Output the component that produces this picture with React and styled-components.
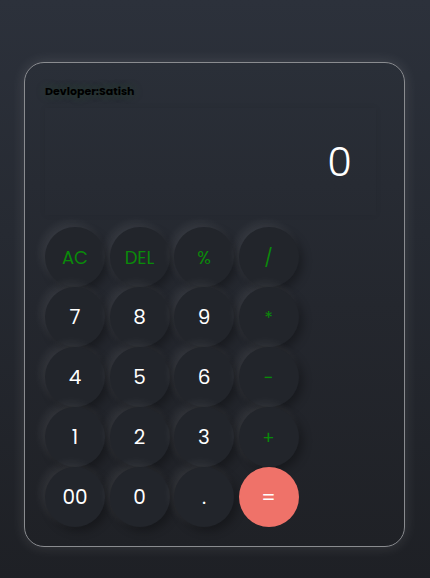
import React from 'react'
import styled, { createGlobalStyle } from 'styled-components'

const GlobalStyle = createGlobalStyle`
  html, body {
    margin: 0;
    padding: 0;
  }
  body {
    font-family: Poppins, Inter, "Liberation Sans", sans-serif;
    background: linear-gradient(180deg, #2c313b 0%, #262a32 40%, #1e2025 100%);
    min-height: 578px;
  }
`

const Page = styled.div`
  width: 430px;
  height: 578px;
  padding: 62px 0 0 24px;
  box-sizing: border-box;
`

const Card = styled.div`
  width: 381px;
  height: 485px;
  box-sizing: border-box;
  border: 1px solid #8a8c90;
  border-radius: 20px;
  background: linear-gradient(180deg, #2a2f38 0%, #24272e 50%, #1f2126 100%);
  box-shadow: 0 0 14px rgba(255, 255, 255, 0.12);
  padding: 21px 20px 0 20px;
`

const Title = styled.div`
  font-size: 11px;
  font-weight: 700;
  color: #000;
  text-shadow: 0 0 10px rgba(40, 120, 40, 0.35);
  height: 14px;
  line-height: 14px;
  margin-bottom: 10px;
`

const Display = styled.div`
  width: 331px;
  height: 107px;
  display: flex;
  align-items: center;
  justify-content: flex-end;
  padding-right: 24px;
  box-sizing: border-box;
  color: #fff;
  font-size: 40px;
  font-weight: 300;
  box-shadow: 0 0 6px rgba(0, 0, 0, 0.07);
  margin-bottom: 12px;
`

const Keys = styled.div`
  display: grid;
  grid-template-columns: repeat(4, 60px);
  grid-auto-rows: 60px;
  column-gap: 4.5px;
`

const Key = styled.button`
  width: 60px;
  height: 60px;
  border: none;
  border-radius: 50%;
  background: ${p => (p.$equal ? '#ef7269' : '#22252b')};
  color: ${p => (p.$op ? '#0a8a0a' : '#fff')};
  font-family: inherit;
  font-size: ${p => (p.$op ? '18px' : '20px')};
  font-weight: 400;
  box-shadow: ${p =>
    p.$equal
      ? 'none'
      : '-4px -4px 10px rgba(255, 255, 255, 0.08), 4px 4px 10px rgba(0, 0, 0, 0.3)'};
  padding: 0;
  cursor: pointer;
`

const keys = [
  ['AC', true], ['DEL', true], ['%', true], ['/', true],
  ['7'], ['8'], ['9'], ['*', true],
  ['4'], ['5'], ['6'], ['−', true],
  ['1'], ['2'], ['3'], ['+', true],
  ['00'], ['0'], ['.'], ['=', false, true],
]

const App = () => {
  return (
    <Page>
      <GlobalStyle />
      <Card>
        <Title>Devloper:Satish</Title>
        <Display>0</Display>
        <Keys>
          {keys.map(([label, op, eq]) => (
            <Key key={label} $op={op} $equal={eq}>{label}</Key>
          ))}
        </Keys>
      </Card>
    </Page>
  )
}

export default App
